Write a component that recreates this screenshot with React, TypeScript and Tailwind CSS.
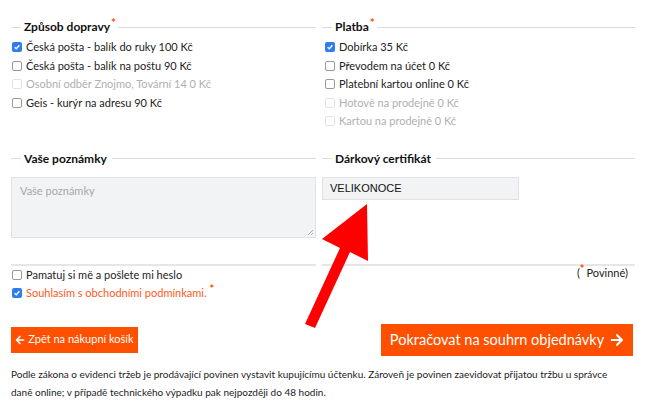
import React from "react";
import { FaArrowLeft, FaArrowRight } from "react-icons/fa";

type Opt = { label: string; checked?: boolean; disabled?: boolean };

const shipping: Opt[] = [
  { label: "Česká pošta - balík do ruky 100 Kč", checked: true },
  { label: "Česká pošta - balík na poštu 90 Kč" },
  { label: "Osobní odběr Znojmo, Tovární 14 0 Kč", disabled: true },
  { label: "Geis - kurýr na adresu 90 Kč" },
];

const payment: Opt[] = [
  { label: "Dobírka 35 Kč", checked: true },
  { label: "Převodem na účet 0 Kč" },
  { label: "Platební kartou online 0 Kč" },
  { label: "Hotově na prodejně 0 Kč", disabled: true },
  { label: "Kartou na prodejně 0 Kč", disabled: true },
];

const Box = ({ checked, disabled }: { checked?: boolean; disabled?: boolean }) =>
  checked ? (
    <span className="w-[10px] h-[10px] rounded-[2px] bg-[#2f7cf0] flex items-center justify-center shrink-0">
      <svg width="8" height="8" viewBox="0 0 8 8">
        <path d="M1.6 4.2 L3.3 5.8 L6.4 2.2" stroke="white" strokeWidth="1.4" fill="none" />
      </svg>
    </span>
  ) : (
    <span
      className={`w-[10px] h-[10px] rounded-[2px] border bg-white shrink-0 ${
        disabled ? "border-[#e2e2e2]" : "border-[#9a9a9a]"
      }`}
    />
  );

const Row = ({ o, red }: { o: Opt; red?: boolean }) => (
  <div className="flex items-center h-[18.5px] gap-[4px]">
    <Box checked={o.checked} disabled={o.disabled} />
    <span
      className={`text-[11px] ${
        o.disabled ? "text-[#b0b0b0]" : red ? "text-[#ff5a1e]" : "text-[#222]"
      }`}
    >
      {o.label}
      {red && <span className="text-[#ff4a00] text-[11px] ml-[3px] font-bold relative -top-[4px]">*</span>}
    </span>
  </div>
);

const Legend = ({ title, req }: { title: string; req?: boolean }) => (
  <div className="flex items-center h-4">
    <div className="w-[10px] h-px bg-[#dcdcdc]" />
    <div className="px-[3px] font-bold text-[12px] text-[#111] relative">
      {title}
      {req && (
        <span className="absolute -top-[4px] right-[-3px] text-[#ff4a00] text-[12px] font-bold">*</span>
      )}
    </div>
    <div className={`flex-1 h-px bg-[#dcdcdc] ${req ? "ml-[5px]" : "ml-[2px]"}`} />
  </div>
);

export default function App() {
  return (
    <div
      className="relative w-[650px] h-[415px] bg-white overflow-hidden"
      style={{ fontFamily: "Lato, 'Open Sans', sans-serif" }}
    >
      <div className="pl-[11px] pr-[15px] pt-[19px]">
        <div className="grid grid-cols-[305px_313px] gap-x-[6px]">
          <div>
            <Legend title="Způsob dopravy" req />
            <div className="mt-[3px] pl-[1px]">
              {shipping.map((o) => (
                <Row key={o.label} o={o} />
              ))}
            </div>
          </div>
          <div>
            <Legend title="Platba" req />
            <div className="mt-[3px] pl-[3px]">
              {payment.map((o) => (
                <Row key={o.label} o={o} />
              ))}
            </div>
          </div>
        </div>

        <div className="grid grid-cols-[305px_313px] gap-x-[6px] mt-[20px]">
          <div>
            <Legend title="Vaše poznámky" />
            <div className="mt-[10px] h-[61px] bg-[#f2f3f5] border border-[#e1e2e4] px-[8px] py-[5px] text-[11px] text-[#a8a8a8] relative">
              Vaše poznámky
              <svg className="absolute right-[1px] bottom-[1px]" width="7" height="7" viewBox="0 0 7 7">
                <path d="M6 1 L1 6 M6 4 L4 6" stroke="#999" strokeWidth="0.8" />
              </svg>
            </div>
          </div>
          <div>
            <Legend title="Dárkový certifikát" />
            <div
              className="mt-[10px] w-[197px] h-[23px] bg-[#f2f3f5] border border-[#e1e2e4] px-[7px] flex items-center text-[11px] text-[#111]"
              style={{ fontFamily: "'Liberation Sans', Arial, sans-serif" }}
            >
              VELIKONOCE
            </div>
          </div>
        </div>

        <div className="grid grid-cols-[305px_313px] gap-x-[6px] mt-[26px]">
          <div className="h-[2px] bg-[#e6e6e6]" />
          <div className="h-[2px] bg-[#e6e6e6]" />
        </div>

        <div className="flex justify-between items-start">
          <div className="pl-[1px]">
            <Row o={{ label: "Pamatuj si mě a pošlete mi heslo" }} />
            <Row o={{ label: "Souhlasím s obchodními podmínkami.", checked: true }} red />
          </div>
          <div className="text-[11px] text-[#222] mr-[7px] leading-[14px]">
            (<span className="text-[#ff4a00] relative -top-[4px] mr-[2px] font-bold">*</span>Povinné)
          </div>
        </div>

        <div className="flex items-center justify-between mt-[21px] pr-[2px]">
          <button className="h-[26px] w-[127px] bg-[#ff5000] text-white text-[11px] flex items-center justify-center gap-[3px] whitespace-nowrap">
            <FaArrowLeft className="w-[10px] h-[10px]" />
            Zpět na nákupní košík
          </button>
          <button className="h-[32px] w-[252px] bg-[#ff5000] text-white text-[14.5px] flex items-center justify-center gap-[6px] whitespace-nowrap">
            Pokračovat na souhrn objednávky
            <FaArrowRight className="w-[14px] h-[14px]" />
          </button>
        </div>

        <p className="mt-[9px] text-[10px] leading-[18px] text-[#222]">
          Podle zákona o evidenci tržeb je prodávající povinen vystavit kupujícímu účtenku. Zároveň je povinen zaevidovat přijatou tržbu u správce
          <br />
          daně online; v případě technického výpadku pak nejpozději do 48 hodin.
        </p>
      </div>

      <svg className="absolute left-0 top-0 pointer-events-none" width="650" height="415">
        <polygon
          points="305,324 340,248 322,239 367,204 368,261 350,252 315,328"
          fill="#ff0000"
        />
      </svg>
    </div>
  );
}
